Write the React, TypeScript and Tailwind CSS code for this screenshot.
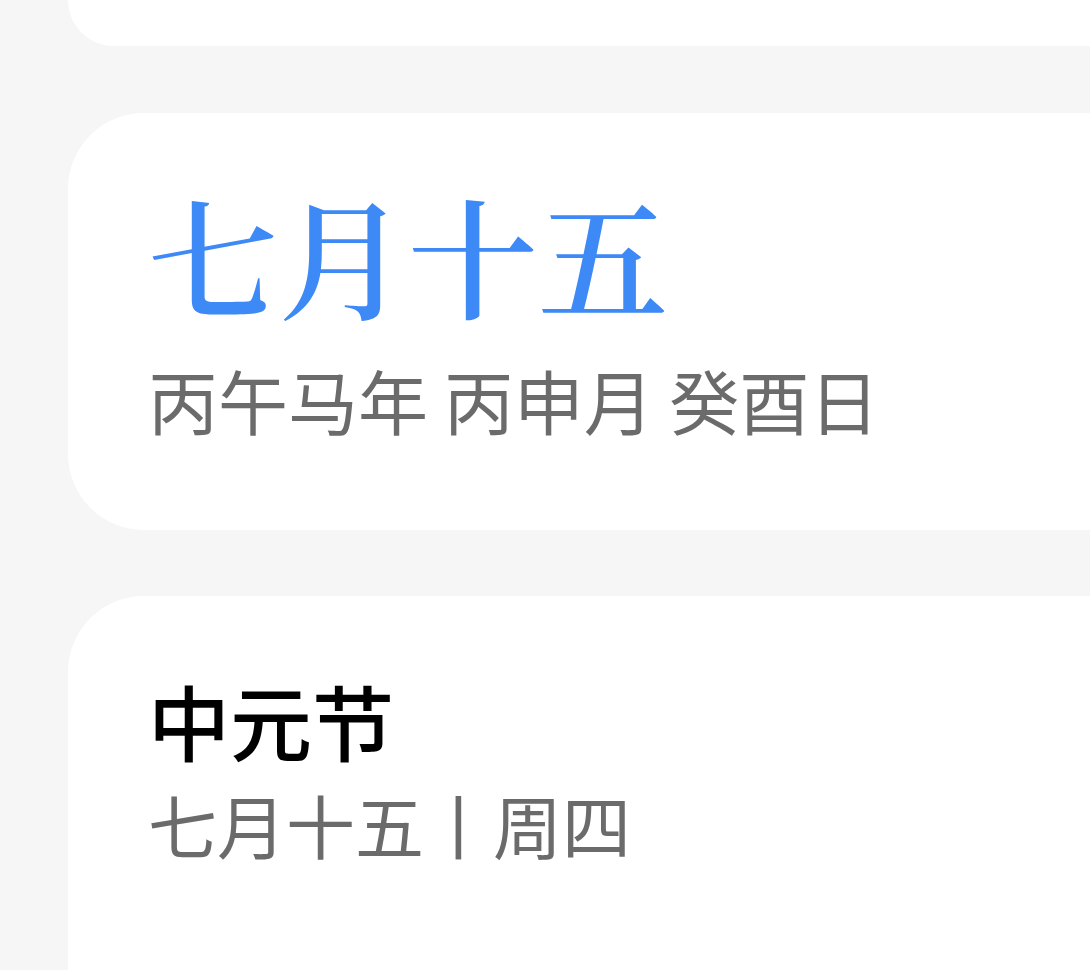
export default function App() {
  const sans = { fontFamily: '"Noto Sans CJK SC", "Noto Sans", sans-serif' };
  return (
    <div className="flex h-[970px] w-[1090px] flex-col overflow-hidden bg-[#f6f6f6] pl-[68px]" style={sans}>
      <div className="h-[46px] shrink-0 rounded-bl-[76px] bg-white" />

      <div className="mt-[67px] flex h-[417px] shrink-0 flex-col rounded-l-[76px] bg-white pl-[80px] pt-[75px]">
        <div className="font-['Noto_Serif_CJK_SC','Noto_Sans_CJK_SC',serif] text-[130px] font-semibold leading-none text-[#3d8af7]">
          七月十五
        </div>
        <div className="mt-[47px] text-[70px] leading-none text-[#6b6b6b]">丙午马年 丙申月 癸酉日</div>
      </div>

      <div className="mt-[66px] flex flex-1 flex-col rounded-tl-[76px] bg-white pl-[80px] pt-[83px]">
        <div className="text-[82px] font-medium leading-none text-black">中元节</div>
        <div className="mt-[29px] text-[69px] leading-none text-[#6b6b6b]">七月十五丨周四</div>
      </div>
    </div>
  );
}
